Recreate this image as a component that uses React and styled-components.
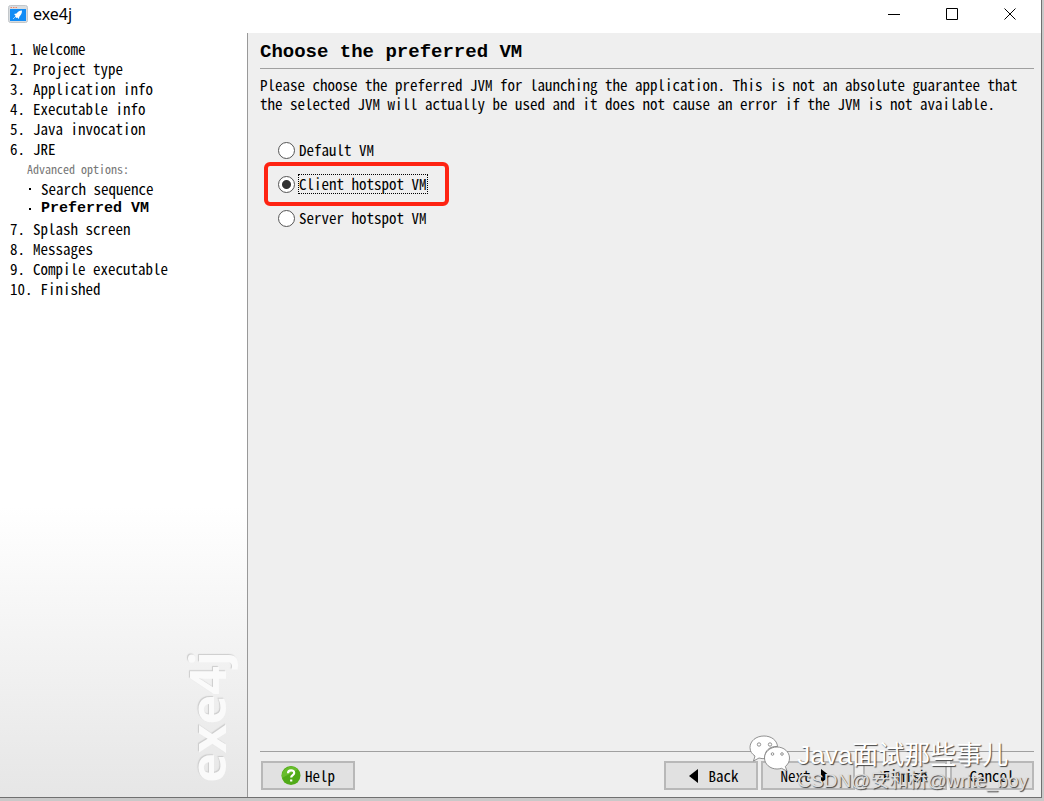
import React, { useState } from 'react';
import styled, { createGlobalStyle } from 'styled-components';

const steps = [
  { number: '1.', label: 'Welcome' },
  { number: '2.', label: 'Project type' },
  { number: '3.', label: 'Application info' },
  { number: '4.', label: 'Executable info' },
  { number: '5.', label: 'Java invocation' },
  {
    number: '6.',
    label: 'JRE',
    options: [{ label: 'Search sequence' }, { label: 'Preferred VM', active: true }],
  },
  { number: '7.', label: 'Splash screen' },
  { number: '8.', label: 'Messages' },
  { number: '9.', label: 'Compile executable' },
  { number: '10.', label: 'Finished' },
];

const vms = ['Default VM', 'Client hotspot VM', 'Server hotspot VM'];

const App = () => {
  const [vm, setVm] = useState('Client hotspot VM');

  return (
    <Desktop>
      <GlobalStyle />
      <Window>
        <TitleBar>
          <AppIcon />
          <AppName>exe4j</AppName>
          <WindowButton aria-label="Minimize">
            <svg width="12" height="12"><path d="M0 6.5h12" /></svg>
          </WindowButton>
          <WindowButton aria-label="Maximize">
            <svg width="12" height="12"><path d="M.5.5h11v11H.5z" /></svg>
          </WindowButton>
          <WindowButton aria-label="Close">
            <svg width="12" height="12"><path d="M.5.5l11 11M11.5.5l-11 11" /></svg>
          </WindowButton>
        </TitleBar>
        <Body>
          <Sidebar>
            <StepList>
              {steps.map((step) => (
                <li key={step.number}>
                  <Step>
                    <span>{step.number}</span>
                    <span>{step.label}</span>
                  </Step>
                  {step.options && (
                    <Options>
                      <OptionsTitle>Advanced options:</OptionsTitle>
                      {step.options.map((option) => (
                        <Option key={option.label}>
                          <Bullet />
                          <OptionLabel $active={option.active}>{option.label}</OptionLabel>
                        </Option>
                      ))}
                    </Options>
                  )}
                </li>
              ))}
            </StepList>
            <Brand>exe4j</Brand>
          </Sidebar>
          <Main>
            <Title>Choose the preferred VM</Title>
            <Description>
              Please choose the preferred JVM for launching the application. This is not an absolute guarantee that the selected JVM will actually be used and it does not cause an error if the JVM is not available.
            </Description>
            <RadioGroup role="radiogroup" aria-label="Preferred VM">
              {vms.map((name) => (
                <RadioRow key={name} $marked={name === 'Client hotspot VM'}>
                  <Radio type="radio" name="vm" checked={vm === name} onChange={() => setVm(name)} />
                  <RadioText $focused={vm === name}>{name}</RadioText>
                </RadioRow>
              ))}
            </RadioGroup>
            <Footer>
              <Button>
                <HelpIcon />
                Help
              </Button>
              <Spacer />
              <ButtonGroup>
                <Button>
                  <Arrow width="9" height="14"><path d="M9 0v14L0 7z" /></Arrow>
                  Back
                </Button>
                <Button>
                  Next
                  <Arrow width="9" height="14"><path d="M0 0v14l9-7z" /></Arrow>
                </Button>
              </ButtonGroup>
              <ButtonGroup>
                <Button $narrow>Finish</Button>
                <Button $narrow>Cancel</Button>
              </ButtonGroup>
            </Footer>
          </Main>
        </Body>
      </Window>
      <Watermark>
        <ChatIcon />
        <WatermarkName>Java面试那些事儿</WatermarkName>
        <WatermarkSource>CSDN@安和桥@write_boy</WatermarkSource>
      </Watermark>
    </Desktop>
  );
};

const AppIcon = () => (
  <svg width="20" height="18" viewBox="0 0 20 18">
    <rect x=".5" y=".5" width="19" height="17" rx="2" fill="#d9dde0" stroke="#c3c7ca" />
    <path d="M2.500 2.500h1.500M5 2.500h1.500M7.500 2.500h1.500" stroke="#f0886c" />
    <rect x="2" y="4" width="16" height="12" fill="#128cf5" />
    <path d="M14 5.500c-3 0-4.500 1.500-5.500 3l-2.500.5 1.500 1.500-.5 1 1.500 1.500 1-.5 1.200 1.500.8-2.500c1.500-1.500 2.500-3 2.500-6z" fill="#fff" />
    <path d="M7 12l-2 2" stroke="#9fd0fb" />
  </svg>
);

const HelpIcon = () => (
  <svg width="20" height="20" viewBox="0 0 20 20">
    <circle cx="10" cy="9.500" r="9.500" fill="#50aa17" />
    <path d="M1 12a9.500 9.500 0 0 1 16-8.500z" fill="#68bd2c" />
    <path d="M7 7.200c0-3.800 6.200-3.800 6.200-.3 0 2.200-3 2.300-3 4.700M10.200 13.500v2" fill="none" stroke="#fff" strokeWidth="2.200" />
  </svg>
);

const ChatIcon = () => (
  <ChatSvg width="42" height="38" viewBox="0 0 42 38">
    <path d="M15 3C7 3 1 8 1 14.500c0 4 2 6.500 5 8.500l-1.500 5 5.500-3c2 .6 4 .8 6 .6C15 17.500 21 13 28.500 13.500 28 7 22 3 15 3z" />
    <path d="M28 14c-7 0-12.500 5-12.500 11S21 36 28 36c1.500 0 3-.2 4.500-.7L38 38l-1.700-4.500c2.700-2 4.200-5 4.200-8.500 0-6-5.500-11-12.500-11z" />
    <circle cx="10" cy="11.500" r="1.700" />
    <circle cx="21" cy="11.500" r="1.700" />
    <circle cx="23.500" cy="21" r="1.300" />
    <circle cx="33" cy="21" r="1.300" />
  </ChatSvg>
);

const GlobalStyle = createGlobalStyle`
  * {
    box-sizing: border-box;
  }

  body {
    margin: 0;
    color: #000;
    font-family: 'Noto Sans Mono CJK SC', 'Liberation Mono', monospace;
    font-size: 15px;
  }
`;

const Desktop = styled.div`
  position: relative;
  display: flex;
  min-height: 100vh;
  padding: 0 2px 3px 0;
  background: #c9c9c9;
`;

const Window = styled.div`
  display: flex;
  flex: 1;
  flex-direction: column;
  min-width: 0;
  border-right: 1px solid #707070;
  border-bottom: 1px solid #707070;
  background: #fff;
`;

const TitleBar = styled.header`
  display: flex;
  align-items: center;
  height: 33px;
  padding: 0 2px 6px 8px;
`;

const AppName = styled.span`
  flex: 1;
  margin-left: 5px;
  font-family: 'Noto Sans', sans-serif;
  font-size: 16px;
`;

const WindowButton = styled.button`
  display: flex;
  align-items: center;
  justify-content: center;
  width: 58px;
  height: 26px;
  padding: 0;
  border: 0;
  background: none;

  path {
    fill: none;
    stroke: #000;
  }
`;

const Body = styled.div`
  display: flex;
  flex: 1;
`;

const Sidebar = styled.nav`
  display: flex;
  flex-direction: column;
  flex: 0 0 248px;
  justify-content: space-between;
  padding: 6px 10px 14px;
  border-right: 1px solid #999;
  background: linear-gradient(#fff 62%, #e6e6e6);
`;

const StepList = styled.ol`
  margin: 0;
  padding: 0;
  list-style: none;
  line-height: 20px;
`;

const Step = styled.div`
  display: flex;
  gap: 8px;
`;

const Options = styled.div`
  padding-left: 17px;
`;

const OptionsTitle = styled.div`
  color: #777;
  font-size: 12px;
`;

const Option = styled.div`
  display: flex;
  align-items: center;
  gap: 10px;
  height: 20px;
  padding-left: 2px;
`;

const Bullet = styled.span`
  width: 2px;
  height: 2px;
  background: #000;
`;

const OptionLabel = styled.span`
  font-family: ${({ $active }) => ($active ? "'Liberation Mono', monospace" : 'inherit')};
  font-weight: ${({ $active }) => ($active ? 'bold' : 'normal')};
  line-height: ${({ $active }) => ($active ? '24px' : '20px')};
`;

const Brand = styled.div`
  align-self: flex-end;
  margin-right: 6px;
  color: #fafafa;
  font-family: 'Open Sans', sans-serif;
  font-size: 50px;
  font-weight: bold;
  line-height: 48px;
  text-shadow: 1px -1px 1px #ccc;
  writing-mode: vertical-rl;
  transform: rotate(180deg);
`;

const Main = styled.main`
  display: flex;
  flex: 1;
  flex-direction: column;
  min-width: 0;
  padding: 0 7px 7px 12px;
  background: #efefef;
`;

const Title = styled.h1`
  margin: 0;
  padding: 7px 0 4px;
  border-bottom: 1px solid #a0a0a0;
  font-family: 'Liberation Mono', monospace;
  font-size: 19px;
  line-height: 24px;
`;

const Description = styled.p`
  margin: 6px 0 25px;
  line-height: 19px;
`;

const RadioGroup = styled.div`
  display: flex;
  flex-direction: column;
  align-items: flex-start;
  padding-left: 4px;
`;

const RadioRow = styled.label`
  display: flex;
  align-items: center;
  gap: 4px;
  height: ${({ $marked }) => ($marked ? '44px' : '24px')};
  padding: 0 ${({ $marked }) => ($marked ? '18px' : '14px')} 0 ${({ $marked }) => ($marked ? '10px' : '14px')};
  border: ${({ $marked }) => ($marked ? '4px solid #fe2312' : '0')};
  border-radius: 6px;
`;

const Radio = styled.input`
  width: 17px;
  height: 17px;
  margin: 0;
  border: 1px solid #555;
  border-radius: 50%;
  background: ${({ checked }) => (checked ? 'radial-gradient(#333 4px, #fff 5px)' : '#fff')};
  appearance: none;
`;

const RadioText = styled.span`
  line-height: 18px;
  outline: ${({ $focused }) => ($focused ? '1px dotted #000' : 'none')};
`;

const Footer = styled.footer`
  display: flex;
  gap: 8px;
  margin-top: auto;
  padding: 9px 0 0 1px;
  border-top: 1px solid #a0a0a0;
`;

const Spacer = styled.div`
  flex: 1;
`;

const ButtonGroup = styled.div`
  display: flex;
  gap: 3px;
`;

const Button = styled.button`
  display: flex;
  align-items: center;
  justify-content: center;
  gap: 4px;
  width: ${({ $narrow }) => ($narrow ? '84px' : '94px')};
  height: 29px;
  padding: 0;
  border: 2px solid #b8b8b8;
  background: #e1e1e1;
  color: #000;
  font: inherit;
`;

const Arrow = styled.svg`
  margin: 0 6px;
`;

const Watermark = styled.div`
  position: absolute;
  right: 16px;
  bottom: 10px;
  display: grid;
  grid-template-columns: 42px auto;
  column-gap: 6px;
  color: #fff;
  font-family: 'Liberation Sans', 'Noto Sans CJK SC', sans-serif;
  text-shadow: 1px 1px 1px #444;
  white-space: nowrap;
  pointer-events: none;
`;

const ChatSvg = styled.svg`
  fill: #fff;
  stroke: #777;
  stroke-width: 0.8px;
`;

const WatermarkName = styled.div`
  padding-top: 6px;
  font-size: 26px;
  line-height: 32px;
`;

const WatermarkSource = styled.div`
  grid-column: 2;
  color: #ddd;
  font-size: 19px;
  line-height: 20px;
`;

export default App;
